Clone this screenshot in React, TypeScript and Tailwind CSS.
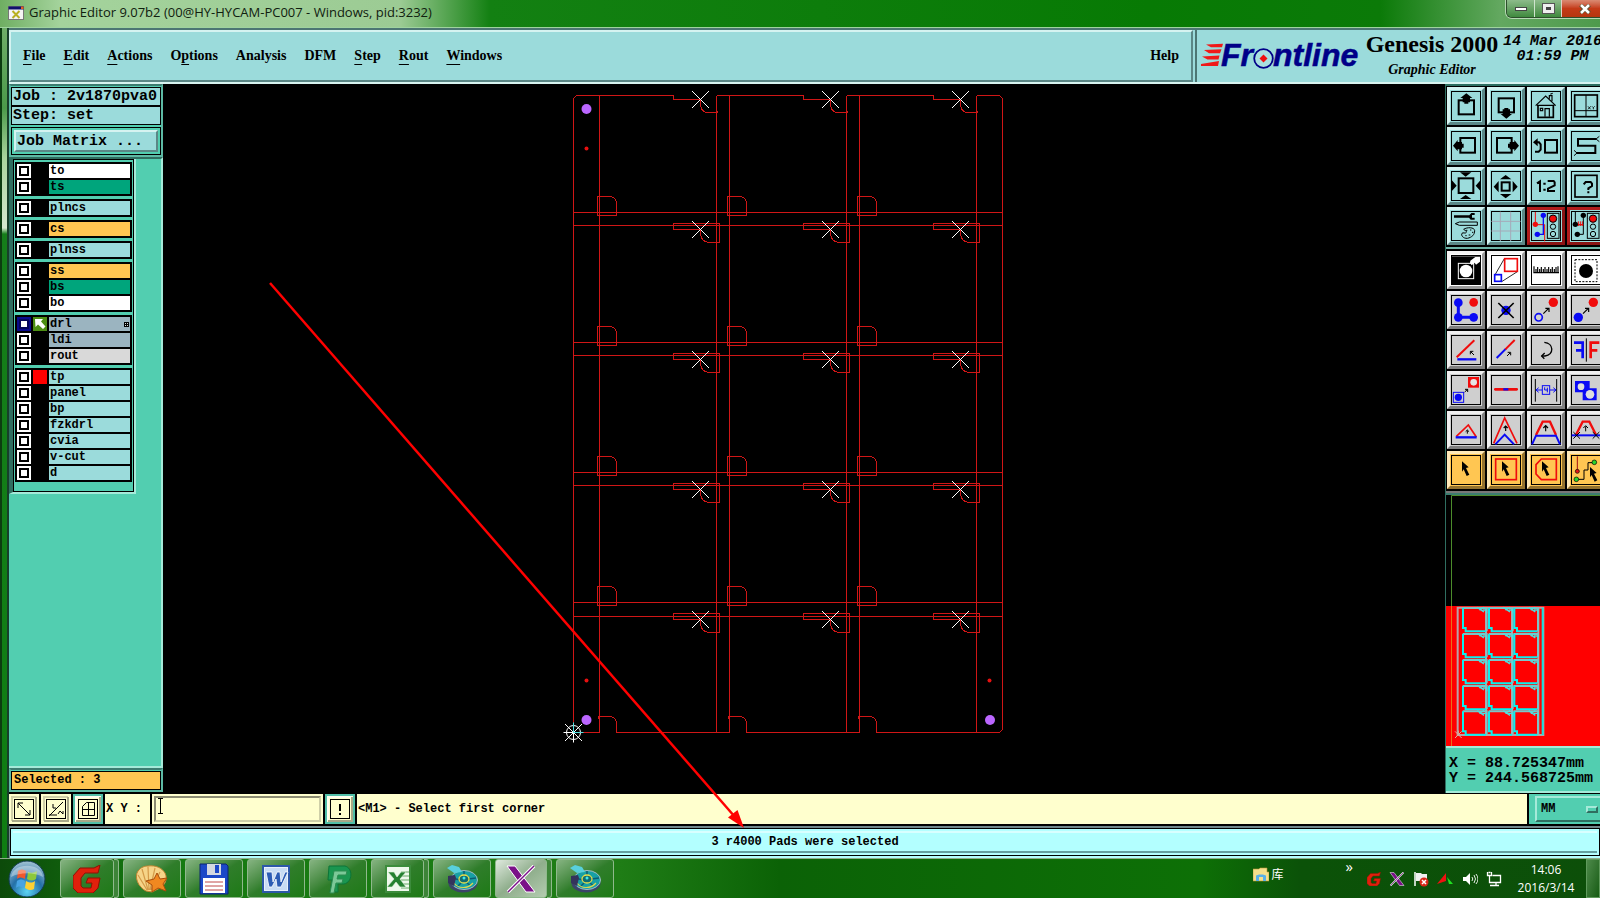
import React from "react";

type Tone = "teal" | "red" | "white" | "gray" | "amber";
type Tool = { name: string; tone: Tone; art: React.ReactNode };

const toneClass: Record<Tone, string> = {
  teal: "bg-[#9bdbdb] border-t-[#d5f3f1] border-l-[#d5f3f1] border-r-[#5b8786] border-b-[#5b8786]",
  red: "bg-[#9bdbdb] border-t-[#b01c1c] border-l-[#b01c1c] border-r-[#8a1414] border-b-[#8a1414]",
  white: "bg-white border-t-[#f4f4f4] border-l-[#f4f4f4] border-r-[#9a9a9a] border-b-[#9a9a9a]",
  gray: "bg-[#cfcfcf] border-t-[#efefef] border-l-[#efefef] border-r-[#808080] border-b-[#808080]",
  amber: "bg-[#ffc652] border-t-[#ffe9b8] border-l-[#ffe9b8] border-r-[#94722e] border-b-[#94722e]",
};

const K = "#000";
const R = "#f00c0c";
const B = "#0a0af5";

/* Artwork of a toolbox shares one sheet: cells are 114 units wide on a pitch of 120. */
const viewTools: Tool[] = [
  { name: "Pan up", tone: "teal", art: <><rect x="86" y="61" width="46" height="42" fill="none" stroke={K} strokeWidth="6" /><path d="M109 40l18 14h-7v13h-5v4h-12v-4h-5V54h-7z" fill={K} /></> },
  { name: "Pan down", tone: "teal", art: <><rect x="206" y="55" width="46" height="42" fill="none" stroke={K} strokeWidth="6" /><path d="M229 116l17-14h-6V88h-5v-4h-12v4h-5v14h-6z" fill={K} /></> },
  { name: "Home view", tone: "teal", art: <g fill="none" stroke={K} strokeWidth="3.5"><path d="M317 77l30-29 30 29M321 76h52M358 56v-9h8v17M361 43l7-3" /><path d="M324 76v36h46V76" strokeWidth="5" /><rect x="331" y="85" width="7" height="7" /><path d="M345 110V86h13v24" /></g> },
  { name: "XY view", tone: "teal", art: <><rect x="434" y="45" width="68" height="65" fill="none" stroke={K} strokeWidth="5" /><path d="M468 45v65M434 92h68" stroke={K} strokeWidth="3" /><path d="M474 79l8 9M482 79l-8 9M486 79l4 4 4-4M490 83v5" fill="none" stroke={K} strokeWidth="2.500" /></> },
  { name: "Pan left", tone: "teal", art: <><rect x="91" y="174" width="44" height="44" fill="none" stroke={K} strokeWidth="6" /><path d="M69 197l14-17v6h13v5h5v12h-5v5H83v6z" fill={K} /></> },
  { name: "Pan right", tone: "teal", art: <><rect x="201" y="174" width="44" height="44" fill="none" stroke={K} strokeWidth="6" /><path d="M267 197l-14-17v6h-14v5h-5v12h5v5h14v6z" fill={K} /></> },
  { name: "Previous view", tone: "teal", art: <><rect x="345" y="180" width="36" height="38" fill="none" stroke={K} strokeWidth="6" /><path d="M316 187h11l5 6v16l-6 6h-11" fill="none" stroke={K} strokeWidth="6" /><path d="M309 187l14-12v24z" fill={K} /></> },
  { name: "Serpentine", tone: "teal", art: <><path d="M498 177h-54v20h52v22h-56" fill="none" stroke={K} strokeWidth="6" /><path d="M498 177l10-8M498 177l10 8M441 219l-9-8M441 219l-9 8" stroke={K} strokeWidth="3" /></> },
  { name: "Zoom out", tone: "teal", art: <><rect x="86" y="295" width="44" height="44" fill="none" stroke={K} strokeWidth="6" /><path d="M90 277h34l-17 13zM90 357h34l-17-12zM65 300v34l15-17zM152 300v34l-15-17z" fill={K} /></> },
  { name: "Zoom in", tone: "teal", art: <><rect x="215" y="307" width="24" height="25" fill="none" stroke={K} strokeWidth="6" /><path d="M210 298l17-13 17 13zM210 342l17 13 17-13zM206 303v34l-15-17zM248 303v34l15-17z" fill={K} /></> },
  { name: "Zoom 1:2", tone: "teal", art: <g fill="none" stroke={K} strokeWidth="6"><path d="M321 310l9-6v32M353 303h18l3 4v9l-20 10v7h21" /><path d="M340 311h7M340 329h7" /></g> },
  { name: "Help on tool", tone: "teal", art: <><rect x="435" y="286" width="66" height="65" fill="none" stroke={K} strokeWidth="5" /><path d="M461 313l6-7h15l4 5v7l-11 7v5M475 334v6" fill="none" stroke={K} strokeWidth="6" /></> },
  { name: "Setup tools", tone: "teal", art: <><path d="M72 406h46l6-7h10v6h-8v8h8v6h-12l-5-6H72z" fill={K} /><path d="M76 431l12-5h54v10H88z" fill="none" stroke={K} strokeWidth="3" /><path d="M101 448c10-7 32-7 33 4 0 12-8 20-22 23-12 1-20-9-16-15 3-4 10 2 13-3 2-4-5-6-8-9z" fill="none" stroke={K} strokeWidth="3" /><path d="M107 451h5M120 450h4M126 457h4M116 465h5M106 467h4" stroke={K} strokeWidth="3" /></> },
  { name: "Grid", tone: "teal", art: <path d="M211 395v88M242 395v88M184 424h88M184 453h88" stroke="#a5a9b8" strokeWidth="3" /> },
  { name: "Net check", tone: "red", art: <><path d="M316 396v38h28v50" fill="none" stroke={R} strokeWidth="3" /><path d="M340 408v55h-18" fill="none" stroke={B} strokeWidth="4" /><circle cx="316" cy="433" r="8" fill={R} /><circle cx="340" cy="406" r="8" fill={B} /><circle cx="322" cy="463" r="8" fill={B} /><rect x="352" y="400" width="35" height="75" fill="none" stroke={K} strokeWidth="3" /><circle cx="369" cy="416" r="11" fill={R} stroke={K} strokeWidth="3" /><circle cx="369" cy="440" r="8" fill="none" stroke={K} strokeWidth="3" /><circle cx="369" cy="462" r="8" fill="none" stroke={K} strokeWidth="3" /></> },
  { name: "Net compare", tone: "red", art: <><path d="M436 396v38h20M460 408v55h-18" fill="none" stroke={K} strokeWidth="3" /><path d="M445 424v14M451 424v14M457 424v14M443 434h17" stroke={R} strokeWidth="3" /><circle cx="436" cy="433" r="8" fill={K} /><circle cx="460" cy="406" r="8" fill={K} /><circle cx="442" cy="463" r="8" fill={K} /><rect x="472" y="400" width="35" height="75" fill="none" stroke={K} strokeWidth="3" /><circle cx="489" cy="416" r="11" fill={R} stroke={K} strokeWidth="3" /><circle cx="489" cy="440" r="8" fill="none" stroke={K} strokeWidth="3" /><circle cx="489" cy="462" r="8" fill="none" stroke={K} strokeWidth="3" /></> },
];

const cursor = "l20 18-8 2 10 20-8 4-9-20-5 7z";

const editTools: Tool[] = [
  { name: "Negative", tone: "white", art: <><rect x="64" y="34" width="89" height="84" fill={K} /><rect x="85" y="55" width="46" height="46" fill="none" stroke="#fff" strokeWidth="3" /><circle cx="108" cy="78" r="19" fill="#fff" /><path d="M121 47l15-11h14v14l-12 9-4-6-9 8-5-7z" fill="#fff" /></> },
  { name: "Resize area", tone: "white", art: <><path d="M223 41l-30 52M262 80l-47 30" stroke={K} strokeWidth="2.5" /><rect x="224" y="41" width="38" height="38" fill="none" stroke={R} strokeWidth="5" /><rect x="194" y="89" width="20" height="20" fill="none" stroke={B} strokeWidth="5" /></> },
  { name: "Ruler", tone: "white", art: <path d="M312 64v19M318 72v11M323 66v17M329 72v11M334 66v17M340 72v11M345 66v17M351 72v11M356 66v17M362 72v11M367 66v17M373 72v11M378 66v17M384 64v19M310 83h77" stroke={K} strokeWidth="3.5" /> },
  { name: "Round feature", tone: "white", art: <><circle cx="468" cy="78" r="21" fill={K} /><rect x="435" y="44" width="66" height="66" fill="none" stroke={K} strokeWidth="3" strokeDasharray="6 4" /></> },
  { name: "Chain", tone: "gray", art: <><path d="M85 173v44h46" fill="none" stroke={B} strokeWidth="9" /><circle cx="85" cy="173" r="13" fill={B} /><circle cx="85" cy="217" r="13" fill={B} /><circle cx="131" cy="217" r="13" fill={B} /><circle cx="131" cy="172" r="13" fill={R} /></> },
  { name: "Delete feature", tone: "gray", art: <><circle cx="228" cy="196" r="14" fill={B} /><path d="M205 174l46 45M251 174l-46 45" stroke={K} strokeWidth="5" /></> },
  { name: "Move", tone: "gray", art: <><circle cx="326" cy="217" r="11" fill="none" stroke={B} strokeWidth="5" /><circle cx="370" cy="172" r="14" fill={R} /><path d="M340 206l16-16M346 190h11v11" fill="none" stroke={K} strokeWidth="3.5" /></> },
  { name: "Copy", tone: "gray", art: <><circle cx="445" cy="217" r="14" fill={B} /><circle cx="490" cy="172" r="14" fill={R} /><path d="M459 206l16-16M465 190h11v11" fill="none" stroke={K} strokeWidth="3.5" /></> },
  { name: "Rotate", tone: "gray", art: <><path d="M80 337l53-51" stroke={R} strokeWidth="6" /><path d="M82 343h57" stroke={B} strokeWidth="7" /><path d="M132 330l-10-10M121 328v-9h9" fill="none" stroke={K} strokeWidth="3" /></> },
  { name: "Stretch line", tone: "gray", art: <><path d="M200 339l28-28" stroke={B} strokeWidth="6" /><path d="M226 313l28-28" stroke={R} strokeWidth="6" /><path d="M231 333l9-9M233 322h9v9" fill="none" stroke={K} strokeWidth="3" /></> },
  { name: "Turn arc", tone: "gray", art: <><path d="M343 292c29 3 30 37 2 41h-10" fill="none" stroke={K} strokeWidth="4" /><path d="M344 324l-9 9 8 8" fill="none" stroke={K} strokeWidth="4" /></> },
  { name: "Mirror", tone: "gray", art: <><path d="M432 293h26v47M458 316h-20" fill="none" stroke={B} strokeWidth="8" /><path d="M508 293h-26v47M482 316h20" fill="none" stroke={R} strokeWidth="8" /><path d="M469 280v70" stroke={K} strokeWidth="3" /></> },
  { name: "Replace pad", tone: "gray", art: <><rect x="70" y="442" width="31" height="30" fill="none" stroke={B} strokeWidth="3" /><circle cx="85" cy="457" r="11" fill={B} /><rect x="114" y="396" width="33" height="32" fill={R} /><circle cx="131" cy="412" r="10" fill="#e6e6e6" /><path d="M104 441l9-8M105 433h8v8" fill="none" stroke={K} strokeWidth="3" /></> },
  { name: "Join lines", tone: "gray", art: <><path d="M196 433h64" stroke={R} strokeWidth="8" strokeLinecap="round" /><path d="M220 433h15" stroke={B} strokeWidth="7" /></> },
  { name: "Spacing", tone: "gray", art: <><path d="M316 402v68M380 402v68" stroke={K} strokeWidth="3" /><path d="M318 435h18M378 435h-18M326 428l-8 7 8 7M370 428l8 7-8 7" fill="none" stroke={B} strokeWidth="3" /><rect x="337" y="422" width="22" height="26" fill="none" stroke={B} strokeWidth="3" /><path d="M344 427v8h9M352 428v14" fill="none" stroke={B} strokeWidth="3" /></> },
  { name: "Merge shapes", tone: "gray", art: <><path d="M435 408h44v22h21v36h-42v-24h-23z" fill={B} /><circle cx="453" cy="425" r="10" fill="#ddd" /><circle cx="480" cy="448" r="13" fill="#ddd" /></> },
  { name: "Raise corner", tone: "gray", art: <><path d="M79 574l36-34 24 36" fill="none" stroke={R} strokeWidth="5" /><path d="M77 577h63" stroke={B} strokeWidth="7" /><path d="M112 566v-10M107 560l5-5 5 5" fill="none" stroke={K} strokeWidth="3" /></> },
  { name: "Raise peak", tone: "gray", art: <><path d="M191 595l33-76 37 76" fill="none" stroke={R} strokeWidth="5" /><path d="M196 598l28-29 28 29" fill="none" stroke={B} strokeWidth="6" /><path d="M227 558v-13M221 549l6-6 6 6" fill="none" stroke={K} strokeWidth="3.5" /></> },
  { name: "Raise segment", tone: "gray", art: <><path d="M318 570l20-40h22l18 40" fill="none" stroke={R} strokeWidth="7" /><path d="M306 598l12-26h60l12 26" fill="none" stroke={B} strokeWidth="6" /><path d="M347 559v-15M340 549l7-7 7 7" fill="none" stroke={K} strokeWidth="3.5" /></> },
  { name: "Trim segment", tone: "gray", art: <><path d="M438 569l20-39h20l20 39" fill="none" stroke={R} strokeWidth="7" /><path d="M425 571h85" stroke={B} strokeWidth="6" /><path d="M467 559v-15M460 549l7-7 7 7M430 561l20 20M450 561l-20 20M488 561l20 20M508 561l-20 20" fill="none" stroke={K} strokeWidth="3" /></> },
  { name: "Select feature", tone: "amber", art: <path d={`M96 649${cursor}z`} fill={K} /> },
  { name: "Select in frame", tone: "amber", art: <><rect x="197" y="642" width="62" height="62" fill="none" stroke={R} strokeWidth="5" /><path d={`M216 649${cursor}z`} fill={K} /></> },
  { name: "Select in polygon", tone: "amber", art: <><path d="M334 642h45v62h-45l-16-17v-28z" fill="none" stroke={R} strokeWidth="5" /><path d={`M336 649${cursor}z`} fill={K} /></> },
  { name: "Select net", tone: "amber", art: <><path d="M442 634v44" stroke="#a01010" strokeWidth="3" /><circle cx="442" cy="679" r="6" fill="#e01818" stroke={K} strokeWidth="2" /><path d="M442 703h20v-28h12v-22h16" fill="none" stroke={K} strokeWidth="3" /><circle cx="493" cy="652" r="7" fill="#2bd52b" stroke={K} strokeWidth="2" /><circle cx="439" cy="703" r="7" fill="#2bd52b" stroke={K} strokeWidth="2" /><path d={`M480 666${cursor}z`} fill={K} /></> },
];

function ToolGrid({ tools, top }: { tools: Tool[]; top: number }) {
  return (
    <div className="grid grid-cols-[repeat(4,38px)] gap-[2px] overflow-hidden bg-black pl-px">
      {tools.map((t, i) => {
        const x = 51 + 120 * (i % 4);
        const y = top + 120 * Math.floor(i / 4);
        return (
          <button key={t.name} aria-label={t.name} className={`block size-[38px] border-[3px] ${toneClass[t.tone]}`}>
            <svg viewBox={`${x + 9} ${y + 9} 96 96`} className="block size-8" aria-hidden="true">
              <rect x={x + 13.5} y={y + 13.5} width="87" height="87" fill="none" stroke={K} strokeWidth="3" />
              {t.art}
            </svg>
          </button>
        );
      })}
    </div>
  );
}

type Layer = { name: string; color: string; active?: boolean; swatch?: string };
const aqua = "bg-[#9bdbdb]";
const layerGroups: Layer[][] = [
  [{ name: "to", color: "bg-white" }, { name: "ts", color: "bg-[#00a57c]" }],
  [{ name: "plncs", color: aqua }],
  [{ name: "cs", color: "bg-[#ffc652]" }],
  [{ name: "plnss", color: aqua }],
  [{ name: "ss", color: "bg-[#ffc652]" }, { name: "bs", color: "bg-[#00a57c]" }, { name: "bo", color: "bg-white" }],
  [{ name: "drl", color: "bg-[#9bb4c0]", active: true }, { name: "ldi", color: "bg-[#9bb4c0]" }, { name: "rout", color: "bg-[#d9d9d9]" }],
  [
    { name: "tp", color: aqua, swatch: "bg-[#ff0000]" },
    { name: "panel", color: aqua },
    { name: "bp", color: aqua },
    { name: "fzkdrl", color: aqua },
    { name: "cvia", color: aqua },
    { name: "v-cut", color: aqua },
    { name: "d", color: aqua },
  ],
];

function LayerRow({ layer }: { layer: Layer }) {
  return (
    <label className="flex h-[14px] gap-[2px]">
      <input
        type="checkbox"
        defaultChecked={layer.active}
        className="size-[14px] shrink-0 appearance-none border-2 border-white bg-white shadow-[inset_0_0_0_2px_#000] checked:border-[#0a0a8c] checked:shadow-[inset_0_0_0_2px_#05055a]"
      />
      <span className={`size-[14px] shrink-0 ${layer.active ? "bg-[#4d8f14]" : layer.swatch ?? "bg-black"}`}>
        {layer.active && (
          <svg viewBox="0 0 14 14" className="size-[14px]" aria-hidden="true">
            <path d="M2 2h8L8 4.500l4.500 5-2.500 2.500-5-4.500L2.500 10z" fill="#fff" />
          </svg>
        )}
      </span>
      <span className={`flex flex-1 items-center justify-between px-px text-[12px] leading-[14px] ${layer.color}`}>
        {layer.name}
        {layer.active && (
          <svg viewBox="0 0 5 5" className="size-[5px]" aria-hidden="true">
            <path d="M0 0h5v5H0z" fill="#000" />
            <path d="M1 1h1v1H1zM3 1h1v1H3zM1 3h1v1H1zM3 3h1v1H3z" fill="#ddd" />
          </svg>
        )}
      </span>
    </label>
  );
}

function LayerPanel() {
  return (
    <aside className="flex w-[154px] shrink-0 flex-col border-b border-black bg-[#52ceb0] font-['Liberation_Mono',monospace] font-bold">
      <div className="border-2 border-[#5db9a4] border-t-[#3c7c70] text-[15px]">
        <div className="mt-px h-[19px] overflow-hidden border border-black bg-[#9bdbdb] px-px leading-[18px] whitespace-nowrap">Job : 2v1870pva0</div>
        <div className="h-[19px] border border-black bg-[#9bdbdb] px-px leading-[18px]">Step: set</div>
        <div className="mt-[2px] border border-black p-[2px]">
          <button className="block h-[22px] w-full border-2 border-t-[#d5f3f1] border-l-[#d5f3f1] border-r-[#5b8786] border-b-[#5b8786] bg-[#9bdbdb] pl-px text-left leading-[19px]">Job Matrix ...</button>
        </div>
      </div>
      <div className="flex-1 border-t-2 border-r-2 border-b-2 border-t-[#2f6e60] border-r-[#a5ead9] border-b-[#a5ead9]">
        <div className="w-[127px] border-r-2 border-b-2 border-l-4 border-r-[#a5ead9] border-b-[#a5ead9] border-l-[#2f6e60]">
          <div className="flex flex-col gap-[3px] border border-black px-px pt-[2px] pb-[9px]">
            {layerGroups.map((g) => (
              <div key={g[0].name} className="flex flex-col gap-[2px] bg-black p-[2px]">
                {g.map((l) => (
                  <LayerRow key={l.name} layer={l} />
                ))}
              </div>
            ))}
          </div>
        </div>
      </div>
      <div className="border-2 border-t-[#3c7c70] border-[#5db9a4] pt-px">
        <div className="h-[19px] border border-black bg-[#ffc652] px-[2px] text-[12px] leading-[17px]">Selected : 3</div>
      </div>
    </aside>
  );
}

const cols = [0, 130, 260];
const rows = [0, 130, 260, 390];

function BoardCanvas() {
  return (
    <main className="flex min-w-0 flex-1 bg-black">
      <svg viewBox="163 84 1282 709" className="w-full" role="img" aria-label="Board drawing">
        <g fill="none" stroke="#d01616" strokeWidth="1" shapeRendering="crispEdges">
          <path d="M673.500 95.500H576.500L573.500 98.500V732.500H599.500V95.500" />
          <path d="M976.500 95.500H999.500L1002.500 98.500V729.500L999.500 732.500H876.500" />
          <path d="M716.500 95.500H803.500M846.500 95.500H933.500M616.500 732.500H729.500M746.500 732.500H859.500" />
          <path d="M716.500 95.500V732.500M729.500 95.500V732.500M846.500 95.500V732.500M859.500 95.500V732.500M976.500 95.500V732.500" />
          <path d="M573.500 212.500H1002.500M573.500 225.500H1002.500M573.500 342.500H1002.500M573.500 355.500H1002.500M573.500 472.500H1002.500M573.500 485.500H1002.500M573.500 602.500H1002.500M573.500 616.500H1002.500" />
          {cols.map((dx) => (
            <g key={dx} transform={`translate(${dx} 0)`}>
              <path d="M673.500 95.500V99.500H700.500V105.500Q701.500 112.500 708.500 112.500H717.500V110.500" />
              <path d="M598.500 718.500V716.500H610.500Q616.500 717.500 616.500 724.500V732.500" />
              {rows.map((dy) => (
                <g key={dy} transform={`translate(0 ${dy})`}>
                  <path d="M597.500 196.500H610.500Q616.500 197.500 616.500 204.500V215.500H597.500Z" />
                  <path d="M673.500 223.500H719.500V242.500H708.500Q701.500 241.500 700.500 234.500V229.500H673.500Z" />
                </g>
              ))}
            </g>
          ))}
        </g>
        {cols.map((dx) =>
          [0, 130, 260, 390, 520].map((dy) => (
            <path key={`${dx}-${dy}`} transform={`translate(${dx} ${dy})`} d="M692 91l17 17M709 91l-17 17" stroke="#fff" strokeWidth="1" shapeRendering="crispEdges" />
          )),
        )}
        <g fill="#bb66ff">
          <circle cx="586.500" cy="109" r="5" />
          <circle cx="586.500" cy="720" r="5" />
          <circle cx="990" cy="720" r="5" />
        </g>
        <g fill="#e81010">
          <circle cx="586.500" cy="148.500" r="2" />
          <circle cx="586.500" cy="680.500" r="2" />
          <circle cx="989.500" cy="680.500" r="2" />
        </g>
        <g fill="none" stroke="#fff" strokeWidth="1">
          <circle cx="573.500" cy="732.500" r="7" />
          <path d="M563.500 732.500h10M573.500 732.500v10M565 724l17 17M582 724l-17 17" />
          <path d="M573.500 722.500v10h10" stroke="#53e0e0" />
        </g>
      </svg>
    </main>
  );
}

function Overview() {
  return (
    <div className="border-t-2 border-[#3c7c70] bg-black">
      <svg viewBox="48 45 462 753" className="h-[251px] w-[154px]" role="img" aria-label="Overview">
        <rect x="48" y="378" width="462" height="420" fill="#ff0000" />
        <path d="M510 46.500H64.500V378" fill="none" stroke="#4c8c2c" strokeWidth="3" />
        <path d="M64.500 378V798" stroke="#e8701c" strokeWidth="3" />
        <path d="M83 765V383H340V765ZM168 383V765M246 383V765M325 383V765" fill="none" stroke="#b8a4a8" strokeWidth="6" />
        <path d="M338 383V765" stroke="#15dede" strokeWidth="6" />
        {[98, 176, 252].map((x) =>
          [384, 462, 540, 618, 694].map((y) => (
            <g key={`${x}-${y}`} transform={`translate(${x} ${y})`} fill="none">
              <path d="M0 0H72V70" stroke="#7cc4c8" strokeWidth="6" />
              <path d="M1 0V60H9V70H70" stroke="#0af0f0" strokeWidth="6" />
              <path d="M44 -2l20 14M64 -2L50 6M60 6h12v10" stroke="#4ce0e0" strokeWidth="4" />
            </g>
          )),
        )}
        <path d="M75 754l20 20M95 754l-20 20M85 752v12" stroke="#d8b0a0" strokeWidth="3" />
      </svg>
    </div>
  );
}

function RightPanel() {
  return (
    <aside className="flex w-[155px] shrink-0 flex-col overflow-hidden border-l border-[#2f6e60] bg-black">
      <div className="border-t-2 border-b-2 border-t-[#2f6e60] border-b-[#6fb5a8] pt-px pb-[2px]">
        <ToolGrid tools={viewTools} top={21} />
      </div>
      <div className="border-b-2 border-[#777] pt-[2px] pb-[2px]">
        <ToolGrid tools={editTools} top={18} />
      </div>
      <Overview />
      <dl className="flex-1 border-t-2 border-b-2 border-[#a5ead9] bg-[#52ceb0] px-[3px] pt-2 font-['Liberation_Mono',monospace] text-[15px] leading-[15px] font-bold whitespace-pre">
        <div className="flex"><dt>X = </dt><dd>88.725347mm</dd></div>
        <div className="flex"><dt>Y = </dt><dd>244.568725mm</dd></div>
      </dl>
    </aside>
  );
}

function AppIcon({ className }: { className: string }) {
  return (
    <svg viewBox="0 0 16 14" className={className} aria-hidden="true">
      <rect x="0.500" y="0.500" width="15" height="13" fill="#f4f4f4" stroke="#777" />
      <rect x="0.500" y="0.500" width="15" height="3" fill="#10106c" />
      <path d="M4.500 5l7 7M11.500 5l-7 7" stroke="#b8b020" strokeWidth="2" />
      <path d="M13 0.500h2.500V3H13z" fill="#e06020" />
    </svg>
  );
}

function TitleBar() {
  return (
    <header className="flex h-7 items-start justify-between border-b border-[#9fd39f] bg-[linear-gradient(90deg,#6fae62_0,#a4d39c_60px,#9ccb94_400px,#138012_490px,#077a04_1150px,#0b7a08_1380px,#63a860_1500px,#4e9a4c_100%)] pl-2">
      <div className="flex h-[26px] items-center gap-[5px]">
        <AppIcon className="h-[14px] w-4" />
        <h1 className="font-['Open_Sans',sans-serif] text-[13px] text-[#10200f]">Graphic Editor 9.07b2 (00@HY-HYCAM-PC007 - Windows, pid:3232)</h1>
      </div>
      <div className="flex h-[18px] overflow-hidden rounded-bl-md border border-t-0 border-r-0 border-[#2d4f2c] shadow-[0_0_0_1px_#b5d8b3]">
        <button aria-label="Minimize" className="grid w-7 place-items-center border-r border-[#d0e4cf] bg-linear-to-b from-[#8dbb8b] to-[#3f8a3e]">
          <span className="h-1 w-3 border border-[#444] bg-white" />
        </button>
        <button aria-label="Maximize" className="grid w-[27px] place-items-center border-r border-[#e0cfc5] bg-linear-to-b from-[#8dbb8b] to-[#3f8a3e]">
          <span className="h-[9px] w-[11px] border-[3px] border-[#eee] bg-[#444] outline outline-[#555]" />
        </button>
        <button aria-label="Close" className="grid w-[38px] place-items-center bg-linear-to-b from-[#d98a72] via-[#c43a17] to-[#b5360f] pl-2">
          <svg viewBox="0 0 12 10" className="h-[10px] w-3" aria-hidden="true">
            <path d="M1.500 1l9 8M10.500 1l-9 8" stroke="#553" strokeWidth="4" />
            <path d="M2 1l8 8M10 1L2 9" stroke="#fff" strokeWidth="2.500" />
          </svg>
        </button>
      </div>
    </header>
  );
}

const menus: [string, string, string][] = [
  ["", "F", "ile"],
  ["", "E", "dit"],
  ["", "A", "ctions"],
  ["O", "p", "tions"],
  ["Analysis", "", ""],
  ["DFM", "", ""],
  ["", "S", "tep"],
  ["", "R", "out"],
  ["", "W", "indows"],
];

function MenuBar() {
  return (
    <div className="flex h-14 border-t-2 border-[#4c7673] border-b-2 border-b-[#d8f4f0] bg-[#9bdbdb] font-['Liberation_Serif',serif] font-bold">
      <nav className="flex min-w-0 flex-1 items-center justify-between border-2 border-t-[#d5f3f1] border-l-[#d5f3f1] border-r-[#5b8786] border-b-[#5b8786] pr-3 pb-[2px] pl-3 text-[14px]">
        <div className="flex gap-[18px]">
          {menus.map(([a, key, b]) => (
            <button key={a + key + b}>
              {a}
              <span className="underline decoration-1 underline-offset-4">{key}</span>
              {b}
            </button>
          ))}
        </div>
        <button>Help</button>
      </nav>
      <div className="ml-[2px] flex w-[405px] shrink-0 overflow-hidden border-l-2 border-[#4c7673] pl-1">
        <svg viewBox="1201 30 160 50" className="h-[50px] w-40 shrink-0" role="img" aria-label="Frontline">
          <g fill="#f01818">
            <path d="M1206 44.500l17-.8-1 3.500h-11zM1204 50l17.500-.8-1.500 4h-11zM1202 56.500l17.500-1-1 4h-11zM1201 64l18-3-1 5h-17z" />
          </g>
          <g fill="#000088" stroke="#000088" strokeWidth=".5" fontFamily="Liberation Sans, sans-serif" fontWeight="700" fontStyle="italic" fontSize="32">
            <text x="1221" y="66">Fr</text>
            <text x="1273" y="66">ntline</text>
          </g>
          <circle cx="1263.500" cy="58.500" r="9.300" fill="#a8e0e0" stroke="#000088" strokeWidth="1.800" />
          <path d="M1263.500 54.500l4 4-4 4-4-4z" fill="#f01010" />
        </svg>
        <div className="flex w-[142px] shrink-0 flex-col items-center text-center">
          <p className="text-[24px] leading-7">Genesis 2000</p>
          <p className="text-[14px] leading-6 italic">Graphic Editor</p>
        </div>
        <p className="w-[99px] shrink-0 pt-1 text-center font-['Liberation_Mono',monospace] text-[15px] leading-[15px] whitespace-nowrap italic">
          14 Mar 2016
          <br />
          01:59 PM
        </p>
      </div>
    </div>
  );
}

function SnapButton({ label, framed, children }: { label: string; framed?: boolean; children: React.ReactNode }) {
  return (
    <button aria-label={label} className={`grid w-[30px] shrink-0 place-items-center ${framed ? "bg-[#52bfa8]" : "bg-[#ffffce]"}`}>
      <svg viewBox="0 0 26 26" className="size-[26px]" fill="none" stroke="#000" aria-hidden="true">
        <path d="M0 0h26v26H0z" fill="#ffffce" stroke="none" />
        <path d="M1 25V1h24" stroke={framed ? "#fffff0" : "#d0d0a8"} strokeWidth="2" />
        <path d="M25 1v24H1" stroke="#a8a888" strokeWidth="2" />
        <rect x="3.500" y="3.500" width="19" height="19" />
        {children}
      </svg>
    </button>
  );
}

function CommandBar() {
  return (
    <form className="flex h-[33px] border-t border-b-2 border-black bg-black font-['Liberation_Mono',monospace] text-[12px] font-bold" onSubmit={(e) => e.preventDefault()}>
      <div className="flex flex-1 gap-[2px]">
        <SnapButton label="Free snap">
          <path d="M7 7l12 12M7 12V7h5M19 14v5h-5" />
        </SnapButton>
        <SnapButton label="Angle snap">
          <path d="M6 20L20 6M6 19h8M10 8v4h3M15 18l2-3 3 3v-3" />
        </SnapButton>
        <SnapButton label="Grid snap" framed>
          <path d="M7.500 19.500v-9l4-4h8v13zM7 13.500h12M13.500 7v12" />
        </SnapButton>
        <label htmlFor="xy" className="flex w-[45px] items-center bg-[#ffffce] pl-px whitespace-nowrap">X Y :</label>
        <div className="relative w-[171px] bg-[#ffffce] p-[2px]">
          <input id="xy" type="text" className="h-full w-full border-2 border-t-[#8c8c72] border-l-[#8c8c72] border-r-[#cfcfa8] border-b-[#cfcfa8] bg-[#ffffce] px-[2px] outline-none" />
          <svg viewBox="0 0 5 16" className="pointer-events-none absolute top-1 left-[6px] h-4 w-[5px]" aria-hidden="true">
            <path d="M0 .5h5M0 15.500h5M2.500 0v16" stroke="#000" />
          </svg>
        </div>
        <SnapButton label="Alert" framed>
          <path d="M13 8v7M13 17v2" strokeWidth="2" />
        </SnapButton>
        <output className="flex flex-1 items-center bg-[#ffffce] pl-px whitespace-nowrap">&lt;M1&gt; - Select first corner</output>
      </div>
      <div className="ml-[2px] flex w-[71px] bg-[#52ceb0] py-[2px] pl-[6px]">
        <button type="button" aria-label="Units" className="flex flex-1 items-center justify-between border-2 border-r-0 border-t-[#a5ead9] border-l-[#a5ead9] border-b-[#2f6e60] pr-[2px] pl-1">
          MM
          <span className="h-[7px] w-3 border-2 border-t-[#a5ead9] border-l-[#a5ead9] border-r-[#2f6e60] border-b-[#2f6e60]" />
        </button>
      </div>
    </form>
  );
}

function MessageBar() {
  return (
    <div className="h-8 border-t-2 border-[#70868a] border-l bg-[#b3ffff] font-['Liberation_Mono',monospace] text-[12px] font-bold">
      <div className="h-[28px] border border-black p-[2px]">
        <p role="status" className="h-full border-b-2 border-[#64a0a0] bg-[#b3ffff] text-center leading-[22px] shadow-[inset_0_2px_0_#d8ffff]">3 r4000 Pads were selected</p>
      </div>
    </div>
  );
}

const GLogo = ({ className }: { className: string }) => (
  <svg viewBox="0 0 28 28" className={className} aria-hidden="true">
    <path d="M27 0l-2 8H12l-4 5v8l2 2h8l1-5h-6l2-5h12l-2 10-5 5H5l-5-5V11l7-8h14z" fill="#e0200c" stroke="#901004" strokeWidth="1" />
  </svg>
);

const XLogo = ({ className }: { className: string }) => (
  <svg viewBox="0 0 30 28" className={className} aria-hidden="true">
    <path d="M1 1h8l20 26h-9z" fill="#7a1088" stroke="#fff" />
    <path d="M28 1L2 27" stroke="#fff" strokeWidth="3.500" />
    <path d="M28 1L2 27" stroke="#7a1088" strokeWidth="1.500" />
  </svg>
);

const DiscIcon = () => (
  <svg viewBox="0 0 32 28" className="h-7 w-8" aria-hidden="true">
    <ellipse cx="17" cy="18" rx="14.500" ry="9.500" fill="#3a4468" />
    <ellipse cx="18" cy="15" rx="13.500" ry="9.500" fill="#18a0a4" stroke="#a4bcc4" />
    <path d="M6 13l8 2M18 6v5M30 13l-8 1M11 22l4-4M25 21l-4-3" stroke="#0c5c74" strokeWidth="1.500" />
    <path d="M8 18c4 6 14 6 19 0" fill="none" stroke="#d8d850" strokeWidth="1.200" />
    <ellipse cx="18" cy="14" rx="5" ry="4" fill="#106c70" stroke="#e8dc48" strokeWidth="1.300" />
    <circle cx="18" cy="13" r="1.500" fill="#40e8e8" />
    <path d="M1 3l5-3 7 2 3 5-8 1z" fill="#58d0dc" />
    <path d="M2 11l7-1 1 3-2 8-6-3z" fill="#34345c" />
  </svg>
);

const taskItems: { name: string; wide: string; stacked?: boolean; active?: boolean; icon: React.ReactNode }[] = [
  { name: "Genesis", wide: "w-[54px]", stacked: true, icon: <GLogo className="size-7" /> },
  {
    name: "Shell", wide: "w-[58px]",
    icon: (
      <svg viewBox="0 0 32 28" className="h-7 w-8" aria-hidden="true">
        <path d="M10 26C2 22-2 12 2 6c3-4 7-5 10-5 8-1 14 2 17 7 3 6 0 12-5 15l-8 4z" fill="#f6d488" stroke="#c08430" />
        <path d="M11 25L2 10M12 25L6 4M13 25L12 2M14 25l5-22M15 25l9-18M16 25l13-11" stroke="#d49a48" strokeWidth="1.200" />
        <path d="M21 8l3 6 7-1-4 6 3 7-8-3-6 4v-7l-6-4 8-2z" fill="#f08820" stroke="#a84c0c" />
      </svg>
    ),
  },
  {
    name: "Save", wide: "w-[58px]",
    icon: (
      <svg viewBox="0 0 30 32" className="h-8 w-[30px]" aria-hidden="true">
        <path d="M1 1h26l2 2v28H1z" fill="#1c48c8" stroke="#0c2470" />
        <path d="M8 1h14v11H8z" fill="#d4d8e0" /><path d="M16 2h4v8h-4z" fill="#1c48c8" />
        <path d="M4 15h22v15H4z" fill="#fff" /><path d="M6 19h18M6 23h18M6 27h18" stroke="#c04848" />
      </svg>
    ),
  },
  {
    name: "Word", wide: "w-[58px]",
    icon: (
      <svg viewBox="0 0 28 28" className="size-7" aria-hidden="true">
        <path d="M1 1h26v26H1z" fill="#e8f0fc" stroke="#2c58a8" strokeWidth="2" />
        <path d="M3 3h22v22H3z" fill="#c8dcf4" />
        <path d="M4 7h6l1 10 4-10h3l1 10 4-10h3l-7 15h-4l-1-8-4 8H7z" fill="#2c5cb4" stroke="#fff" strokeWidth=".8" />
      </svg>
    ),
  },
  {
    name: "Fabrication", wide: "w-[58px]",
    icon: (
      <svg viewBox="0 0 28 30" className="h-[30px] w-7" aria-hidden="true">
        <path d="M5 2h16c8 2 8 16-1 18h-6v8H6l2-12H4z" fill="#1a9650" stroke="#0c7438" />
        <path d="M10 7h13l-1 4h-8l-1 4h6l-1 4h-6l-2 10H6z" fill="#7cc898" stroke="#2c8c50" />
      </svg>
    ),
  },
  {
    name: "Excel", wide: "w-[53px]", stacked: true,
    icon: (
      <svg viewBox="0 0 26 28" className="h-7 w-[26px]" aria-hidden="true">
        <path d="M1 1h24v26H1z" fill="#eef8ec" stroke="#3c8c3c" strokeWidth="2" />
        <path d="M16 7h8M16 11h8M16 15h8M16 19h8M16 23h8" stroke="#68a868" />
        <path d="M3 7h6l3 5 4-5h5l-6 7 6 8h-6l-4-5-4 5H2l7-8z" fill="#248030" stroke="#dff0dc" strokeWidth="0.600" />
      </svg>
    ),
  },
  { name: "Disc 1", wide: "w-[58px]", icon: <DiscIcon /> },
  { name: "Xmanager", wide: "w-[52px]", stacked: true, active: true, icon: <XLogo className="h-7 w-[30px]" /> },
  { name: "Disc 2", wide: "w-[58px]", icon: <DiscIcon /> },
];

function Taskbar() {
  return (
    <footer className="flex h-10 items-stretch border-t border-[#8fae8d] bg-[linear-gradient(90deg,#0c4a0a_0,#157a10_160px,#1f7d16_620px,#0b6206_780px,#0d7006_1200px,#0b5208_1300px,#0c4f09_100%)] font-['Open_Sans','Noto_Sans_CJK_SC',sans-serif] text-[12px] text-white">
      <button aria-label="Start" className="grid w-[54px] shrink-0 place-items-center">
        <svg viewBox="0 0 38 38" className="size-[38px]" aria-hidden="true">
          <defs>
            <radialGradient id="orb" cx="50%" cy="85%" r="85%">
              <stop offset="0" stopColor="#5cd4f4" /><stop offset=".5" stopColor="#2470a8" /><stop offset="1" stopColor="#a4c4d4" />
            </radialGradient>
          </defs>
          <circle cx="19" cy="19" r="18" fill="url(#orb)" stroke="#123c50" />
          <path d="M10 11c3-2 5-2 8 0l-1 8c-3-2-6-2-8 0z" fill="#f0582c" />
          <path d="M20 12c3 1 6 1 9-1l-1 8c-3 2-6 2-9 0z" fill="#8cc83c" />
          <path d="M9 21c3-2 5-2 8 0l-1 7c-3-2-6-2-8 0z" fill="#48a4e4" />
          <path d="M18 21c4 2 6 2 9 0l-1 8c-3 2-6 1-9-1z" fill="#fcd034" />
          <path d="M3 17C5 2 33 2 35 17 26 12 12 12 3 17z" fill="#fff" opacity=".35" />
        </svg>
      </button>
      <nav className="ml-[6px] flex gap-1">
        {taskItems.map((t) => (
          <div key={t.name} className="flex">
            <button
              aria-label={t.name}
              className={`grid place-items-center rounded-[3px] border border-[#8fb98c] ${t.wide} ${t.active ? "bg-linear-to-br from-[#dfe9de] via-[#8fae8c] to-[#b4ccb0]" : "bg-linear-to-br from-[#86b482] via-[#2f7d2a] to-[#1d7a15]"}`}
            >
              {t.icon}
            </button>
            {t.stacked && <span className="w-[5px] rounded-r-[3px] border border-l-0 border-[#8fb98c] bg-[#3d8438]" />}
          </div>
        ))}
      </nav>
      <div className="ml-auto flex">
        <a href="#library" className="mr-[62px] flex items-center gap-[3px] pb-2">
          <svg viewBox="0 0 16 15" className="h-[15px] w-4" aria-hidden="true">
            <path d="M0 2h6l1-1h7v4h2v9H0z" fill="#f4e08c" stroke="#b89438" strokeWidth=".6" />
            <path d="M3 14V9c0-2 10-2 10 0v5h-3v-4H6v4z" fill="#58b0e8" />
          </svg>
          库
        </a>
        <button aria-label="Show hidden icons" className="flex h-5 items-start text-[15px] leading-[14px]">»</button>
        <div className="ml-[14px] flex items-center gap-2">
          <GLogo className="size-[14px]" />
          <XLogo className="h-[14px] w-4" />
          <svg viewBox="0 0 16 16" className="size-4" aria-hidden="true">
            <path d="M2 1v14" stroke="#fff" strokeWidth="1.500" /><path d="M3 2h5l1 1h5v7H3z" fill="#f0f0f0" />
            <circle cx="11" cy="11" r="4.500" fill="#d82818" /><path d="M9 9l4 4M13 9l-4 4" stroke="#fff" strokeWidth="1.500" />
          </svg>
          <svg viewBox="0 0 17 14" className="h-[14px] w-[17px]" aria-hidden="true">
            <path d="M9 1v8l-9 3z" fill="#f01010" /><path d="M10 5l6 7h-4z" fill="#20e020" />
          </svg>
          <svg viewBox="0 0 16 14" className="h-[14px] w-4" aria-hidden="true">
            <path d="M1 5h3l4-4v12L4 9H1z" fill="#fff" />
            <path d="M10 5q1.500 2 0 4M12 3q3 4 0 8M14 2q4 5 0 10" fill="none" stroke="#fff" strokeWidth=".9" />
          </svg>
          <svg viewBox="0 0 16 16" className="size-4" fill="none" stroke="#fff" aria-hidden="true">
            <path d="M6.500 4.500h8v7H5.500M4 14.500h9M10 12v2M1.500 1v3.500h4V1M3.500 5v6.500h2M2.500 1.500h2" strokeWidth="1.300" />
          </svg>
        </div>
        <time dateTime="2016-03-14T14:06" className="ml-3 flex w-[64px] flex-col justify-center text-center leading-[18px]">
          <span>14:06</span>
          <span>2016/3/14</span>
        </time>
        <button aria-label="Show desktop" className="ml-2 w-[14px] border border-[#5f9a5c] bg-linear-to-br from-[#4d8a4a] to-[#155c12]" />
      </div>
    </footer>
  );
}

export default function App() {
  return (
    <div className="relative flex min-h-screen flex-col overflow-hidden bg-black text-black">
      <TitleBar />
      <div className="flex flex-1">
        <div className="w-[9px] shrink-0 border-r-2 border-l-2 border-l-[#0c3c10] border-r-[#173f2a] bg-[linear-gradient(180deg,#6fae68_0,#4b9a4a_80px,#a9d49c_130px,#d5e8cf_200px,#157d1a_206px,#0f7d12_100%)]" />
        <div className="flex min-w-0 flex-1 flex-col">
          <MenuBar />
          <div className="flex flex-1">
            <LayerPanel />
            <BoardCanvas />
            <RightPanel />
          </div>
          <CommandBar />
          <MessageBar />
        </div>
      </div>
      <Taskbar />
      <svg viewBox="0 0 1600 898" className="pointer-events-none absolute inset-0 h-full w-full" aria-hidden="true">
        <path d="M270 283L735 817" stroke="#ff0000" strokeWidth="2.500" />
        <path d="M744 828l-16-10.500 9.500-7.500z" fill="#ff0000" />
      </svg>
    </div>
  );
}
